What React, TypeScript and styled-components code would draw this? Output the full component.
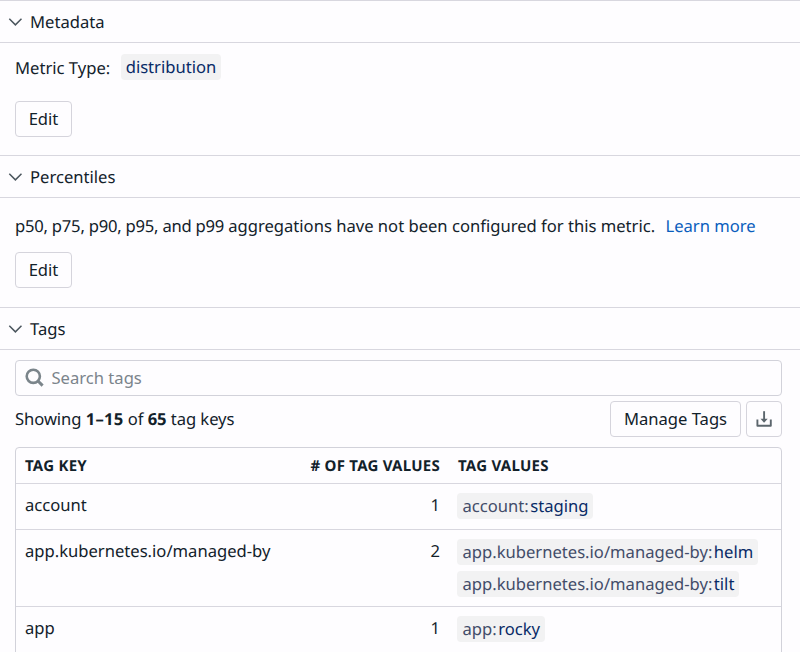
import React from 'react';
import styled, { createGlobalStyle } from 'styled-components';

const GlobalStyle = createGlobalStyle`
  * { box-sizing: border-box; }
  html, body { margin: 0; height: 100%; overflow: hidden; background: #fefdff; }
  body {
    font-family: "Noto Sans", sans-serif;
    font-size: 16.6px;
    line-height: 22px;
    color: #12212a;
    text-rendering: geometricPrecision;
  }
  button, input { font: inherit; color: inherit; }
`;

const Panel = styled.main`
  display: flex;
  flex-direction: column;
  width: 800px;
  height: 652px;
  overflow: hidden;
`;

const SectionHeader = styled.header`
  display: flex;
  align-items: center;
  flex: none;
  gap: 8px;
  height: 43px;
  padding: 1px 8px 0;
  border-top: 1px solid #d8d7df;
  border-bottom: 1px solid #d8d7df;
`;

const SectionTitle = styled.h2`
  margin: 0;
  font-size: inherit;
  font-weight: 400;
`;

const SectionBody = styled.div<{ $height?: number; $top: number }>`
  flex: none;
  height: ${(p) => (p.$height ? `${p.$height}px` : 'auto')};
  padding: ${(p) => p.$top}px 18px 0 15px;
`;

const MetaLine = styled.div`
  display: flex;
  align-items: center;
  gap: 11px;
  height: 27px;
  margin-bottom: 20.5px;
`;

const MetaLabel = styled.span`
  padding-top: 2px;
`;

const Message = styled.p`
  margin: 0 0 15px;
  white-space: nowrap;
`;

const PercentileList = styled.span`
  letter-spacing: -0.22px;
`;

const Link = styled.a`
  margin-left: 10.3px;
  color: #0a5dbd;
  text-decoration: none;
`;

const Chip = styled.span<{ $plain?: boolean }>`
  display: inline-flex;
  align-items: center;
  height: 26px;
  padding: 0 5px 0 ${(p) => (p.$plain ? 4.5 : 5.5)}px;
  border-radius: 4px;
  background: #f2f2f3;
  color: #424c69;
  white-space: nowrap;
`;

const ChipValue = styled.span<{ $spaced?: boolean }>`
  margin-left: ${(p) => (p.$spaced ? 1.5 : 0)}px;
  color: #082a66;
`;

const Button = styled.button<{ $width: number }>`
  display: inline-flex;
  align-items: center;
  justify-content: center;
  width: ${(p) => p.$width}px;
  height: 36px;
  padding: 0;
  border: 1px solid #d5d4dc;
  border-radius: 4px;
  background: transparent;
`;

const SearchBox = styled.label`
  display: flex;
  align-items: center;
  gap: 6.5px;
  height: 36px;
  padding: 0 9px;
  border: 1px solid #d2d2da;
  border-radius: 4px;
`;

const SearchInput = styled.input`
  flex: 1;
  padding: 0;
  border: 0;
  outline: 0;
  background: transparent;
  &::placeholder { color: #7b848c; opacity: 1; }
`;

const Toolbar = styled.div`
  display: flex;
  align-items: center;
  justify-content: space-between;
  margin: 5px 0 10px;
`;

const Summary = styled.span`
  letter-spacing: -0.06px;
`;

const RangeCount = styled.b`
  letter-spacing: 0.25px;
`;

const Actions = styled.div`
  display: flex;
  gap: 5px;
`;

const Table = styled.div`
  height: 260px;
  border: 1px solid #d2d2da;
  border-radius: 4px;
`;

const Row = styled.div<{ $height: number }>`
  display: grid;
  grid-template-columns: 256px 150px 1fr;
  column-gap: 9px;
  height: ${(p) => p.$height}px;
  padding: 10px 9px 0;
  border-bottom: 1px solid #d8d7df;
`;

const HeadRow = styled(Row)`
  padding-top: 7px;
  font-size: 15px;
  font-weight: 700;
  letter-spacing: 0.25px;
`;

const Count = styled.div`
  text-align: right;
  white-space: nowrap;
`;

const Values = styled.div`
  display: flex;
  flex-direction: column;
  align-items: flex-start;
  gap: 6px;
  margin: -1px 0 0 8px;
`;

const ValuesTitle = styled.div`
  margin-left: 9px;
`;

const Chevron = () => (
  <svg width="14" height="10" viewBox="0 0 14 10" fill="none" stroke="#4b565e" strokeWidth="1.5">
    <path d="M1.3 1.8 7.4 7.9 13.5 1.8" />
  </svg>
);

const SearchIcon = () => (
  <svg width="20" height="20" viewBox="0 0 20 20" fill="none" stroke="#7b858b">
    <circle cx="8.3" cy="8.3" r="6.6" strokeWidth="2.6" />
    <path d="m13 13 4.6 4.6" strokeWidth="3" />
  </svg>
);

const DownloadIcon = () => (
  <svg width="18" height="18" viewBox="0 0 18 18" fill="none" stroke="#5c666d">
    <path d="M2.4 9.5v6.2h13.4V9.5" strokeWidth="1.9" strokeLinejoin="round" />
    <path d="M9.1 1.2v9" strokeWidth="1.9" />
    <path d="M5.5 8.7h7.2l-3.6 4.1z" fill="#5c666d" stroke="none" />
  </svg>
);

const rows = [
  { name: 'account', values: ['staging'], height: 46 },
  { name: 'app.kubernetes.io/managed-by', values: ['helm', 'tilt'], height: 77 },
  { name: 'app', values: ['rocky'], height: 46 },
];

const Header = ({ title }: { title: string }) => (
  <SectionHeader>
    <Chevron />
    <SectionTitle>{title}</SectionTitle>
  </SectionHeader>
);

export default function App() {
  return (
    <>
      <GlobalStyle />
      <Panel>
        <Header title="Metadata" />
        <SectionBody $height={112} $top={10}>
          <MetaLine>
            <MetaLabel>Metric Type:</MetaLabel>
            <Chip $plain><ChipValue>distribution</ChipValue></Chip>
          </MetaLine>
          <Button $width={57}>Edit</Button>
        </SectionBody>
        <Header title="Percentiles" />
        <SectionBody $height={109} $top={17}>
          <Message>
            <PercentileList>p50, p75, p90, p95, and p99 </PercentileList>
            aggregations have not been configured for this metric.
            <Link>Learn more</Link>
          </Message>
          <Button $width={57}>Edit</Button>
        </SectionBody>
        <Header title="Tags" />
        <SectionBody $top={10}>
          <SearchBox>
            <SearchIcon />
            <SearchInput placeholder="Search tags" />
          </SearchBox>
          <Toolbar>
            <Summary>Showing <RangeCount>1–15</RangeCount> of <b>65</b> tag keys</Summary>
            <Actions>
              <Button $width={131}>Manage Tags</Button>
              <Button $width={36} aria-label="Download"><DownloadIcon /></Button>
            </Actions>
          </Toolbar>
          <Table>
            <HeadRow $height={36}>
              <div>TAG KEY</div>
              <Count># OF TAG VALUES</Count>
              <ValuesTitle>TAG VALUES</ValuesTitle>
            </HeadRow>
            {rows.map((row) => (
              <Row key={row.name} $height={row.height}>
                <div>{row.name}</div>
                <Count>{row.values.length}</Count>
                <Values>
                  {row.values.map((value) => (
                    <Chip key={value}>{row.name}:<ChipValue $spaced>{value}</ChipValue></Chip>
                  ))}
                </Values>
              </Row>
            ))}
          </Table>
        </SectionBody>
      </Panel>
    </>
  );
}
